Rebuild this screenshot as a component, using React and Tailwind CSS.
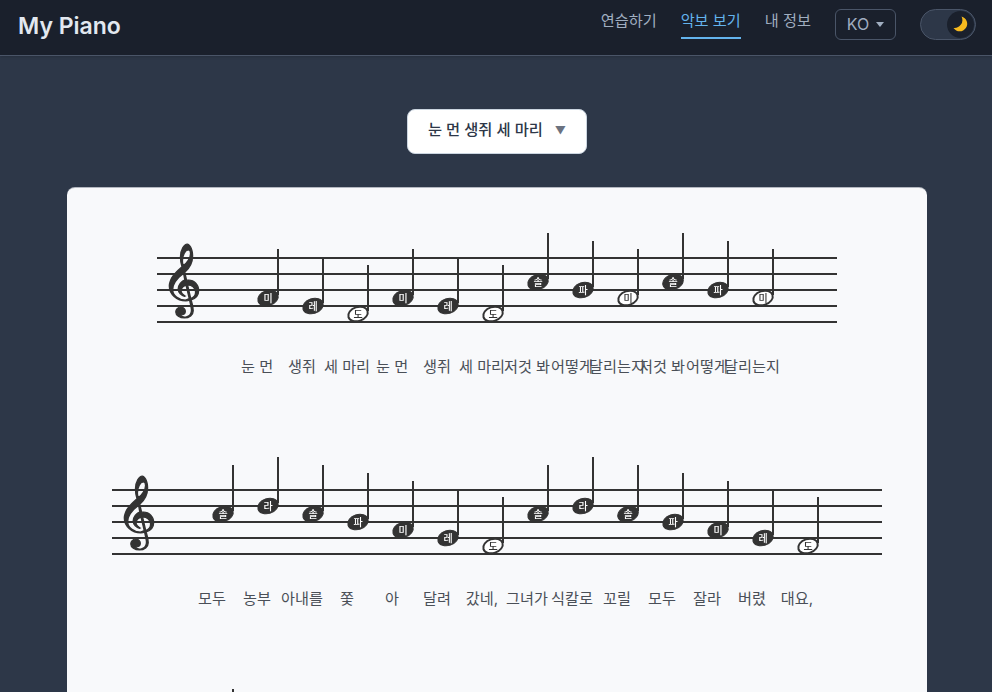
import React from 'react';

const PITCH_Y = { 도: 96, 레: 88, 미: 80, 파: 72, 솔: 64, 라: 56 };
const LINE_Y = [40, 56, 72, 88, 104];

const STAFFS = [
  {
    width: 680,
    notes: [['미'], ['레'], ['도', 1], ['미'], ['레'], ['도', 1], ['솔'], ['파'], ['미', 1], ['솔'], ['파'], ['미', 1]],
    lyrics: ['눈 먼', '생쥐', '세 마리', '눈 먼', '생쥐', '세 마리', '저것 봐', '어떻게', '달리는지', '저것 봐', '어떻게', '달리는지'],
  },
  {
    width: 770,
    notes: [['솔'], ['라'], ['솔'], ['파'], ['미'], ['레'], ['도', 1], ['솔'], ['라'], ['솔'], ['파'], ['미'], ['레'], ['도', 1]],
    lyrics: ['모두', '농부', '아내를', '쫓', '아', '달려', '갔네,', '그녀가', '식칼로', '꼬릴', '모두', '잘라', '버렸', '대요,'],
  },
  {
    width: 770,
    notes: [['라'], ['솔'], ['솔'], ['파']],
    lyrics: [],
  },
];

function Note({ x, name, hollow }) {
  const y = PITCH_Y[name];
  return (
    <g>
      <line x1={x + 10} y1={y - 3} x2={x + 10} y2={y - 49} stroke="#333" strokeWidth="2" />
      <ellipse
        cx={x}
        cy={y}
        rx={hollow ? 10 : 10.5}
        ry={hollow ? 7 : 7.5}
        transform={`rotate(-18 ${x} ${y})`}
        fill={hollow ? '#fff' : '#333'}
        stroke="#333"
        strokeWidth={hollow ? 2 : 1}
      />
      <text
        x={x}
        y={y + 3.5}
        textAnchor="middle"
        fontSize="10"
        fontWeight="500"
        fill={hollow ? '#333' : '#fff'}
      >
        {name}
      </text>
    </g>
  );
}

function Staff({ width, notes, lyrics }) {
  return (
    <div className="flex flex-col items-center mb-[71px]">
      <svg width={width} height="120" className="overflow-visible [will-change:transform] font-['Inter','Noto_Sans_CJK_KR',sans-serif]">
        {LINE_Y.map((y) => (
          <line key={y} x1="0" x2={width} y1={y} y2={y} stroke="#333" strokeWidth="2" />
        ))}
        <text
          x="0"
          y="0"
          fontSize="62"
          fill="#333"
          stroke="#333"
          strokeWidth="1.2"
          transform="translate(3.500 82) scale(1.12 1)"
          fontFamily="'DejaVu Sans','Noto Sans',serif"
        >
          𝄞
        </text>
        {notes.map(([name, hollow], i) => (
          <Note key={i} x={111 + i * 45} name={name} hollow={hollow} />
        ))}
      </svg>
      <div className="flex justify-center mt-[17px] pl-[15px] text-[15.2px] leading-6 text-[#4a4f57]">
        {lyrics.map((word, i) => (
          <div key={i} className="w-[45px] flex justify-center whitespace-nowrap">{word}</div>
        ))}
      </div>
    </div>
  );
}

export default function App() {
  return (
    <div className="h-[692px] overflow-hidden bg-[#2d3748] font-['Inter','Noto_Sans_CJK_KR',sans-serif]">
      {/* Header */}
      <header className="h-[56px] bg-[#1a202c] border-b border-[#4a5568] flex items-center justify-between pl-[18px] pr-4 shadow-sm">
        <h1 className="pb-[2px] text-[23px] font-semibold text-[#e2e8f0]">My Piano</h1>
        <div className="flex items-center gap-6 pb-[7px]">
          <nav className="flex gap-6 text-[15.2px] leading-6">
            <a className="pb-1 border-b-2 border-transparent text-[#a0aec0]">연습하기</a>
            <a className="pb-1 border-b-2 border-[#63b3ed] text-[#63b3ed]">악보 보기</a>
            <a className="pb-1 border-b-2 border-transparent text-[#a0aec0]">내 정보</a>
          </nav>
          <button className="w-[61px] h-[31px] flex items-center justify-center gap-[7px] rounded-md border border-[#4a5568] text-base text-[#a0aec0]">
            KO
            <svg width="8" height="5" viewBox="0 0 8 5"><path d="M0 0h8L4 5z" fill="#a0aec0" /></svg>
          </button>
          <div className="w-[56px] h-[31px] rounded-full bg-[#2d3748] border border-[#4a5568] flex items-center justify-end pr-[1px]">
            <div className="w-[27px] h-[27px] rounded-full bg-[#1a202c] flex items-center justify-center">
              <svg width="16" height="16" viewBox="0 0 16 16">
                <path d="M8.500 0.500A7.500 7.500 0 1 1 0.500 12A8 8 0 0 0 8.500 0.500z" fill="#f6b91e" />
              </svg>
            </div>
          </div>
        </div>
      </header>

      <main className="flex flex-col items-center pl-[67px] pr-[65px]">
        {/* Song select */}
        <button className="mt-[53px] w-[180px] h-[45px] pb-[2px] flex items-center justify-center gap-3 rounded-lg bg-white border border-[#cbd5e0] text-[15.3px] font-medium text-[#2d3748]">
          눈 먼 생쥐 세 마리
          <span className="text-[11px] text-[#6b7280]">▼</span>
        </button>

        {/* Sheet */}
        <div className="mt-[33px] w-full pt-[30px] rounded-lg bg-[#f8f9fb] border-t border-[#4a5568]/40">
          {STAFFS.map((staff, i) => (
            <Staff key={i} {...staff} />
          ))}
        </div>
      </main>
    </div>
  );
}
